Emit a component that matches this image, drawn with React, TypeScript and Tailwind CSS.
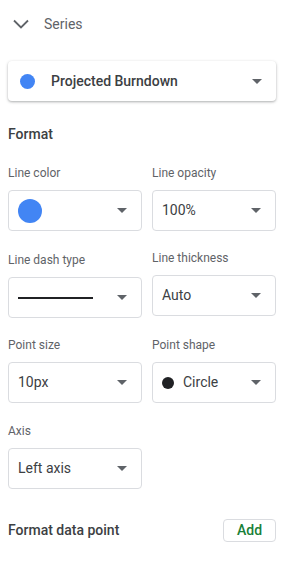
import React from "react";

function Caret() {
  return (
    <svg width="10" height="5" viewBox="0 0 10 5" className="shrink-0">
      <path d="M0 0 L10 0 L5 5 Z" fill="#5f6368" />
    </svg>
  );
}

function SelectBox({ children, className = "" }: { children?: React.ReactNode; className?: string }) {
  return (
    <div
      className={`flex h-[41px] items-center justify-between rounded-[4px] border border-[#dadce0] bg-white pl-[9px] pr-[14px] text-[14px] text-[#3c4043] ${className}`}
    >
      <div className="flex items-center">{children}</div>
      <Caret />
    </div>
  );
}

function Field({
  label,
  children,
  className = "",
}: {
  label: string;
  children?: React.ReactNode;
  className?: string;
}) {
  return (
    <div className={className}>
      <div className="mb-[9px] h-4 text-[12px] leading-4 text-[#5f6368]">{label}</div>
      {children}
    </div>
  );
}

export default function App() {
  return (
    <div
      className="h-[561px] w-[294px] overflow-hidden bg-white px-2"
      style={{ fontFamily: "Roboto, 'Liberation Sans', sans-serif" }}
    >
      {/* Section header */}
      <div className="flex h-12 items-center">
        <svg width="16" height="10" viewBox="0 0 16 10" className="ml-[5px]">
          <path d="M1 1.5 L8 8.5 L15 1.5" fill="none" stroke="#5f6368" strokeWidth="1.8" />
        </svg>
        <span className="ml-[15px] text-[14px] text-[#5f6368]">Series</span>
      </div>

      {/* Series picker */}
      <div className="mt-[13px] flex h-10 w-[268px] items-center justify-between rounded-[4px] bg-white pl-3 pr-[14px] shadow-[0_1px_3px_rgba(60,64,67,0.3),0_1px_2px_rgba(60,64,67,0.15)]">
        <div className="flex items-center">
          <span className="h-[15px] w-[15px] rounded-full bg-[#4285f4]" />
          <span className="ml-[16px] text-[14px] font-medium text-[#3c4043]">Projected Burndown</span>
        </div>
        <Caret />
      </div>

      <div className="mt-[23px] h-5 text-[14px] font-medium leading-5 text-[#3c4043]">Format</div>

      <div className="mt-[21px] grid grid-cols-[134px_124px] gap-x-[10px]">
        <Field label="Line color">
          <SelectBox>
            <span className="h-6 w-6 rounded-full bg-[#4285f4]" />
          </SelectBox>
        </Field>
        <Field label="Line opacity">
          <SelectBox>100%</SelectBox>
        </Field>
      </div>

      <div className="mt-[21px] grid grid-cols-[134px_124px] gap-x-[10px]">
        <Field label="Line dash type">
          <SelectBox>
            <span className="h-[2px] w-[75px] bg-[#202124]" />
          </SelectBox>
        </Field>
        <Field label="Line thickness" className="-mt-[2px]">
          <SelectBox className="mt-[2px]">Auto</SelectBox>
        </Field>
      </div>

      <div className="mt-[19px] grid grid-cols-[134px_124px] gap-x-[10px]">
        <Field label="Point size">
          <SelectBox>10px</SelectBox>
        </Field>
        <Field label="Point shape">
          <SelectBox>
            <span className="h-3 w-3 rounded-full bg-[#202124]" />
            <span className="ml-[9px]">Circle</span>
          </SelectBox>
        </Field>
      </div>

      <Field label="Axis" className="mt-[20px] w-[134px]">
        <SelectBox>Left axis</SelectBox>
      </Field>

      <div className="mt-[30px] flex w-[268px] items-center justify-between">
        <span className="text-[14px] font-medium text-[#3c4043]">Format data point</span>
        <button className="h-[23px] w-[53px] rounded-[4px] border border-[#dadce0] bg-white text-[14px] font-medium text-[#188038]">
          Add
        </button>
      </div>
    </div>
  );
}
